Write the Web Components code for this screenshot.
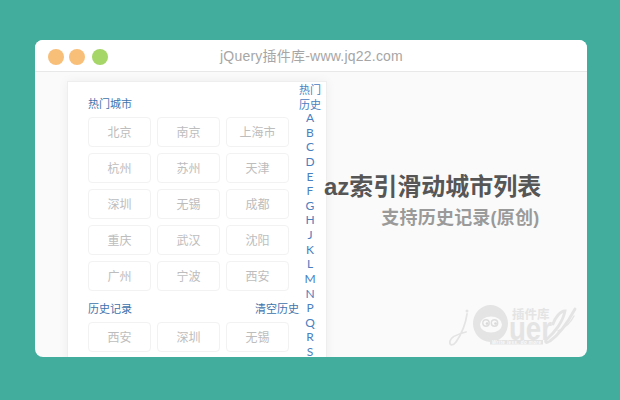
<!DOCTYPE html>
<html><head><meta charset="utf-8"><style>
html,body{margin:0;padding:0;width:620px;height:400px;overflow:hidden;background:#42ad9d}
body{font-family:"Noto Sans CJK SC",sans-serif}
</style></head><body>
<x-window heading="jQuery插件库-www.jq22.com">
  <x-city-panel></x-city-panel>
  <x-promo></x-promo>
  <x-logo></x-logo>
</x-window>
<script>
const CJK='"Noto Sans CJK SC"';
class XWindow extends HTMLElement{constructor(){super();const s=this.attachShadow({mode:'open'});
s.innerHTML=`<style>
:host{display:block;position:absolute;left:35px;top:40px;width:552px;height:317px;border-radius:8px;overflow:hidden;background:#fafafa}
.bar{height:31px;background:#fff;border-bottom:1px solid #e8e8e8;display:flex;align-items:center;padding-left:13px;position:relative}
.dot{width:16px;height:16px;border-radius:50%;background:#f8bf79;margin-top:2px}
.dot+.dot{margin-left:5px}.dot.g{background:#a6d568;margin-left:7px}
h1{position:absolute;left:0;right:0;top:7px;margin:0;text-align:center;font:400 14px/18px "Liberation Sans",${CJK},sans-serif;letter-spacing:.22px;color:#a6a6a6;padding-left:1px}
.body{display:flex;align-items:flex-start;padding:9px 46px 0 32px;position:relative;height:276px}
</style><div class="bar"><div class="dot"></div><div class="dot"></div><div class="dot g"></div><h1>${this.getAttribute('heading')}</h1></div><div class="body"><slot></slot></div>`}}
customElements.define('x-window',XWindow);

class XCity extends HTMLElement{constructor(){super();this.attachShadow({mode:'open'}).innerHTML=`<style>
:host{display:block;width:63px;height:30px;box-sizing:border-box;border:1px solid #f2f2f2;border-radius:4px;background:#fff;text-align:center;font:12px/28px "Noto Sans CJK SC",sans-serif;color:#bdbdbd}
</style><slot></slot>`}}
customElements.define('x-city',XCity);

class XGroup extends HTMLElement{constructor(){super();const a=this.getAttribute('action');
this.attachShadow({mode:'open'}).innerHTML=`<style>
:host{display:block;width:211px}
.h{display:flex;justify-content:space-between;font:11px/20px "Noto Sans CJK SC",sans-serif;color:#3f73ad;height:20px;margin-bottom:4px}
.g{display:grid;grid-template-columns:repeat(3,63px);gap:6px}
</style><div class="h"><span>${this.getAttribute('title')}</span>${a?`<span>${a}</span>`:''}</div><div class="g"><slot></slot></div>`}}
customElements.define('x-group',XGroup);

class XIndex extends HTMLElement{constructor(){super();
const items=['热门','历史',...'ABCDEFGHJKLMNPQRS'];
this.attachShadow({mode:'open'}).innerHTML=`<style>
:host{display:block;width:22px;text-align:center;font:12px/14.62px Lato,"Noto Sans CJK SC",sans-serif;color:#4a80c0}
div{height:14.62px;white-space:nowrap}
.c{font:11px/14.62px "Noto Sans CJK SC",sans-serif}
</style>${items.map((i,n)=>`<div class="${n<2?'c':''}">${i}</div>`).join('')}`}}
customElements.define('x-index',XIndex);

class XPanel extends HTMLElement{constructor(){super();
const hot=['北京','南京','上海市','杭州','苏州','天津','深圳','无锡','成都','重庆','武汉','沈阳','广州','宁波','西安'];
const his=['西安','深圳','无锡'];
const c=a=>a.map(x=>`<x-city>${x}</x-city>`).join('');
this.attachShadow({mode:'open'}).innerHTML=`<style>
:host{display:flex;flex:none;width:260px;height:290px;box-sizing:border-box;background:#fff;border:1px solid #eee;border-bottom:0;box-shadow:0 0 10px rgba(0,0,0,.05);padding:0 5px 0 20px;overflow:hidden}
.l{width:211px;padding-top:11px}
.s{margin-top:7px}
</style><div class="l"><x-group title="热门城市">${c(hot)}</x-group><div class="s"><x-group title="历史记录" action="清空历史">${c(his)}</x-group></div></div><x-index></x-index>`}}
customElements.define('x-city-panel',XPanel);

class XPromo extends HTMLElement{constructor(){super();this.attachShadow({mode:'open'}).innerHTML=`<style>
:host{display:block;position:relative;margin-left:-3px;margin-top:89px;text-align:right;white-space:nowrap;font-family:"Liberation Sans","Noto Sans CJK SC",sans-serif;font-weight:700}
.a{font-size:24px;line-height:34px;color:#565656}
.b{font-size:18px;line-height:26px;margin-top:1px;margin-right:2px;color:#9a9a9a;letter-spacing:.2px}
</style><div class="a">az索引滑动城市列表</div><div class="b">支持历史记录(原创)</div>`}}
customElements.define('x-promo',XPromo);

class XLogo extends HTMLElement{constructor(){super();this.attachShadow({mode:'open'}).innerHTML=`<style>
:host{display:block;position:absolute;left:410px;top:228px;width:135px;height:55px;pointer-events:none}
svg{display:block}
</style><svg width="135" height="55" viewBox="445 300 135 55" fill="none">
<g stroke="#e4e4e4" stroke-linecap="round">
<path d="M467 314 C466 322 462 334 456 342 C453 346 449 346 450 341 C451 337 458 334 466 332" stroke-width="1.8"/>
<path d="M575 309 C568 322 560 334 550 341 C546 344 544 342 547 339 C554 333 563 322 565 311 C560 311 555 318 553 324" stroke-width="2.8"/>
<path d="M558 331 C565 328 571 322 574 316" stroke-width="1.4"/>
</g>
<path fill-rule="evenodd" fill="#e4e4e4" d="M473 323.5a17.5 18.5 0 1 0 35 0a17.5 18.5 0 1 0 -35 0z M480 324.5a11 8 0 1 0 22 0a11 8 0 1 0 -22 0z"/>
<circle cx="467" cy="311" r="1.5" fill="#e4e4e4"/>
<circle cx="486" cy="323" r="3.2" fill="#fafafa" stroke="#dedede" stroke-width="1.4"/>
<circle cx="494.5" cy="323" r="3.2" fill="#fafafa" stroke="#dedede" stroke-width="1.4"/>
<circle cx="487" cy="323.5" r="1.3" fill="#d8d8d8"/><circle cx="495.5" cy="323.5" r="1.3" fill="#d8d8d8"/>
<text x="512" y="319" font-family="Noto Sans CJK SC" font-size="12.5" font-weight="700" fill="#e4e4e4">插件库</text>
<text x="509" y="340" font-family="Liberation Sans" font-size="34" font-weight="700" fill="#e4e4e4" textLength="43" lengthAdjust="spacingAndGlyphs">uer</text>
<rect x="490" y="340" width="53" height="4.5" fill="#e4e4e4"/>
<text x="492" y="344" font-family="Liberation Sans" font-size="4.5" font-style="italic" font-weight="700" fill="#fafafa" textLength="49">Write less, do more</text>
</svg>`}}
customElements.define('x-logo',XLogo);
</script>
</body></html>
